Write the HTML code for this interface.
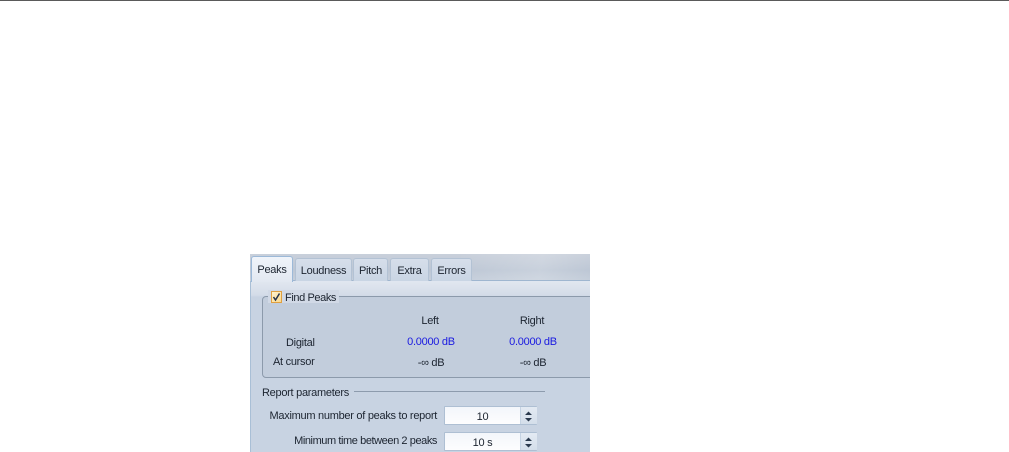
<!DOCTYPE html>
<html><head><meta charset="utf-8">
<style>
html,body{margin:0;padding:0;background:#fff;width:1009px;height:452px;overflow:hidden}
body{position:relative;font-family:"Liberation Sans",sans-serif;font-size:11px;letter-spacing:-.28px;color:#1c2430}
#top{position:absolute;left:0;top:0;width:1009px;height:1px;background:#5a5a5a}
#p{position:absolute;left:250px;top:254px;width:340px;height:198px;overflow:hidden;background:#c6d2e2}
#strip{position:absolute;left:0;top:0;width:340px;height:27px;background:linear-gradient(100deg,rgba(255,255,255,0) 60%,rgba(255,255,255,.18) 85%,rgba(255,255,255,0)),linear-gradient(180deg,#c9d0db,#bdc7d5 60%,#c6cfdb)}
#body{position:absolute;left:0;top:27px;width:340px;height:171px;border-left:1px solid #a9bfd6;box-sizing:border-box;background:linear-gradient(180deg,#e1e7f0 0,#d4dce8 14px,#c8d3e2 16px,#c8d3e2 100%)}
#line{position:absolute;left:43px;top:26px;width:297px;height:1px;background:#9fb6d0}
.tab{position:absolute;top:4px;height:23px;box-sizing:border-box;border:1px solid #b3c2d4;border-bottom:none;border-radius:3px 3px 0 0;background:linear-gradient(180deg,#d6deea,#c9d5e4);text-align:center;line-height:24px;color:#1c2430}
.act{top:2px;height:26px;background:linear-gradient(180deg,#f0f4fa,#e2e8f1);border-color:#9cb9d8;z-index:2;line-height:27px}
#grp{position:absolute;left:12px;top:42px;width:340px;height:82px;box-sizing:border-box;border:1px solid #8c9aab;border-radius:4px;background:#c2cddc}
#mask{position:absolute;left:18px;top:36px;width:71px;height:13px;background:#d1d9e6}
#cb{position:absolute;left:21px;top:37px;width:11px;height:12px;box-sizing:border-box;border:1px solid #e0a040;background:linear-gradient(135deg,#fff2cf,#fbd98c)}
.t{position:absolute;white-space:nowrap;line-height:13px}
.c{transform:translateX(-50%)}
.b{color:#1a1ae0}
.r{position:absolute;height:1px;background:#8d9bad}
.spin{position:absolute;left:194px;width:93px;height:19px;box-sizing:border-box;border:1px solid #aebfd3;background:linear-gradient(180deg,#f3f6fb,#fdfdfe);text-align:center;line-height:20px;border-radius:1px}
.spin i{position:absolute;left:75px;top:0;width:16px;height:17px;border-left:1px solid #c5d3e3;background:linear-gradient(180deg,#e3eaf3,#d4deea)}
.spin span{position:absolute;left:0;width:75px;top:0;font-style:normal}
svg{position:absolute}
</style></head><body>
<div id="top"></div>
<div id="p">
<div id="strip"></div>
<div id="body"></div>
<div id="line"></div>
<div class="tab act" style="left:1px;width:42px">Peaks</div>
<div class="tab" style="left:45px;width:57px">Loudness</div>
<div class="tab" style="left:103px;width:35px">Pitch</div>
<div class="tab" style="left:140px;width:39px">Extra</div>
<div class="tab" style="left:181px;width:41px">Errors</div>
<div id="grp"></div>
<div id="mask"></div>
<div id="cb"><svg width="9" height="10" viewBox="0 0 9 10" style="left:0;top:0"><path d="M1.5 5L3.5 8L7.5 1.5" fill="none" stroke="#26324a" stroke-width="1.5"/></svg></div>
<div class="t" style="left:35px;top:38px;letter-spacing:-.4px">Find Peaks</div>
<div class="t c" style="left:180px;top:61px">Left</div>
<div class="t c" style="left:282px;top:61px">Right</div>
<div class="t" style="left:36px;top:83px">Digital</div>
<div class="t c b" style="left:181px;top:82px">0.0000 dB</div>
<div class="t c b" style="left:283px;top:82px">0.0000 dB</div>
<div class="t" style="left:23px;top:102px">At cursor</div>
<div class="t c" style="left:181px;top:103px">-∞ dB</div>
<div class="t c" style="left:283px;top:103px">-∞ dB</div>
<div class="t" style="left:12px;top:133px">Report parameters</div>
<div class="r" style="left:104px;top:137px;width:191px"></div>
<div class="t" style="right:153px;top:156px">Maximum number of peaks to report</div>
<div class="t" style="right:153px;top:181px;letter-spacing:-.42px">Minimum time between 2 peaks</div>
<div class="spin" style="top:152px"><span>10</span><i></i>
<svg width="9" height="12" viewBox="0 0 9 12" style="left:79px;top:3px"><path d="M4.5 1.5L8 5H1Z M1 8H8L4.5 11.5Z" fill="#2b3a4e"/></svg></div>
<div class="spin" style="top:178px"><span>10 s</span><i></i>
<svg width="9" height="12" viewBox="0 0 9 12" style="left:79px;top:3px"><path d="M4.5 1.5L8 5H1Z M1 8H8L4.5 11.5Z" fill="#2b3a4e"/></svg></div>
</div>
</body></html>
